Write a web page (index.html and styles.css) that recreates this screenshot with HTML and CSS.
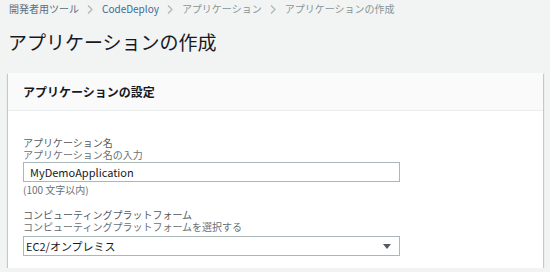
FILE: index.html
```html
<!DOCTYPE html>
<html lang="ja">
<head>
    <meta charset="UTF-8">
    <meta name="viewport" content="width=device-width, initial-scale=1.0">
    <title>アプリケーションの作成</title>
    <link rel="stylesheet" href="styles.css">
</head>
<body>
    <nav class="breadcrumb">
        <a href="#" class="crumb-link">開発者用ツール</a>
        <svg class="chevron" width="6" height="9" viewBox="0 0 6 9"><path d="M1 0.5l4 4-4 4" fill="none" stroke="#aab7b8" stroke-width="1.2"/></svg>
        <a href="#" class="crumb-link crumb-service">CodeDeploy</a>
        <svg class="chevron" width="6" height="9" viewBox="0 0 6 9"><path d="M1 0.5l4 4-4 4" fill="none" stroke="#aab7b8" stroke-width="1.2"/></svg>
        <a href="#" class="crumb-link crumb-muted">アプリケーション</a>
        <svg class="chevron" width="6" height="9" viewBox="0 0 6 9"><path d="M1 0.5l4 4-4 4" fill="none" stroke="#aab7b8" stroke-width="1.2"/></svg>
        <span class="crumb-current">アプリケーションの作成</span>
    </nav>

    <h1 class="page-title">アプリケーションの作成</h1>

    <div class="panel">
        <div class="panel-header">アプリケーションの設定</div>
        <div class="panel-body">
            <div class="field">
                <div class="field-label">アプリケーション名</div>
                <div class="field-desc">アプリケーション名の入力</div>
                <input class="text-input" type="text" value="MyDemoApplication">
                <div class="field-hint">(100 文字以内)</div>
            </div>
            <div class="field field-second">
                <div class="field-label">コンピューティングプラットフォーム</div>
                <div class="field-desc">コンピューティングプラットフォームを選択する</div>
                <div class="select-box">
                    <span>EC2/オンプレミス</span>
                    <svg class="select-arrow" width="8" height="5" viewBox="0 0 8 5"><path d="M0 0h8L4 5z" fill="#545b64"/></svg>
                </div>
            </div>
        </div>
    </div>
</body>
</html>
```

FILE: styles.css
```css
body {
    font-family: "Noto Sans CJK JP", sans-serif;
    background-color: #f2f3f3;
    color: #16191f;
    margin: 0;
    padding: 0 7px 0 8px;
}
.breadcrumb {
    display: flex;
    align-items: center;
    height: 18px;
    font-size: 10px;
    line-height: 12px;
    padding-left: 1px;
}
.breadcrumb a {
    text-decoration: none;
}
.crumb-link {
    color: #5b6d80;
}
.crumb-service {
    color: #3d6b93;
}
.crumb-muted,
.crumb-current {
    color: #879596;
}
.chevron {
    margin: 0 9px 0 8px;
}
.page-title {
    margin: 0;
    padding-top: 12px;
    font-size: 19px;
    font-weight: normal;
    line-height: 24px;
    height: 43px;
}
.panel {
    background-color: #fff;
    box-shadow: 0 1px 1px 0 rgba(0, 28, 36, 0.3), 1px 1px 1px 0 rgba(0, 28, 36, 0.15), -1px 1px 1px 0 rgba(0, 28, 36, 0.15);
}
.panel-header {
    background-color: #fafafa;
    border-bottom: 1px solid #eaeded;
    padding: 11px 15px 10px;
    font-size: 12px;
    font-weight: bold;
    line-height: 16px;
}
.panel-body {
    padding: 26px 15px 12px;
}
.field-label,
.field-desc,
.field-hint {
    font-size: 10px;
    line-height: 12px;
}
.field-label {
    color: #545b64;
}
.field-desc,
.field-hint {
    color: #687078;
}
.field-hint {
    margin-top: 2px;
}
.field-second {
    margin-top: 13px;
}
.text-input {
    display: block;
    box-sizing: border-box;
    width: 377px;
    height: 20px;
    margin: 1px 0 0;
    padding: 0 6px;
    border: 1px solid #aab7b8;
    border-radius: 0;
    font-family: inherit;
    font-size: 11px;
    color: #16191f;
    outline: none;
}
.select-box {
    position: relative;
    display: flex;
    align-items: center;
    box-sizing: border-box;
    width: 377px;
    height: 20px;
    margin-top: 3px;
    padding: 0 2px;
    border: 1px solid #aab7b8;
    font-size: 11px;
}
.select-arrow {
    position: absolute;
    right: 8px;
    top: 7px;
}
```
